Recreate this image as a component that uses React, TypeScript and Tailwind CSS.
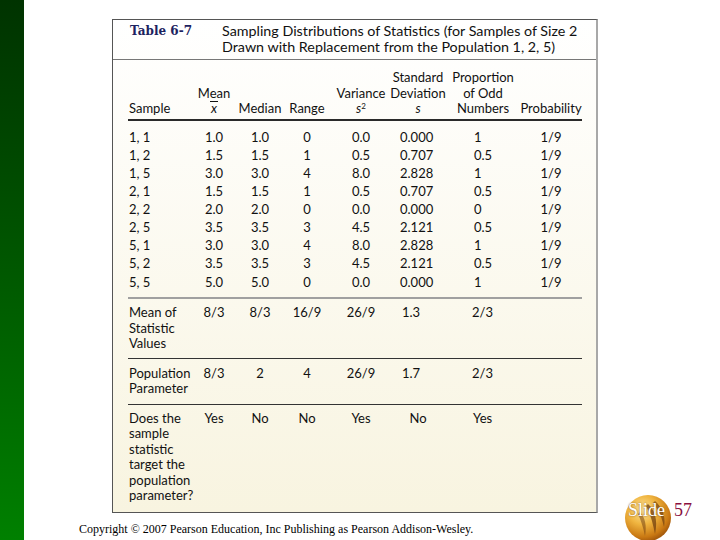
import React from 'react';

const data = [
  ['1, 1', '1.0', '1.0', '0', '0.0', '0.000', '1', '1/9'],
  ['1, 2', '1.5', '1.5', '1', '0.5', '0.707', '0.5', '1/9'],
  ['1, 5', '3.0', '3.0', '4', '8.0', '2.828', '1', '1/9'],
  ['2, 1', '1.5', '1.5', '1', '0.5', '0.707', '0.5', '1/9'],
  ['2, 2', '2.0', '2.0', '0', '0.0', '0.000', '0', '1/9'],
  ['2, 5', '3.5', '3.5', '3', '4.5', '2.121', '0.5', '1/9'],
  ['5, 1', '3.0', '3.0', '4', '8.0', '2.828', '1', '1/9'],
  ['5, 2', '3.5', '3.5', '3', '4.5', '2.121', '0.5', '1/9'],
  ['5, 5', '5.0', '5.0', '0', '0.0', '0.000', '1', '1/9'],
];

// column widths, content starts at x=128
const w = ['w-[62px]', 'w-[48px]', 'w-[44px]', 'w-[50px]', 'w-[58px]', 'w-[56px]', 'w-[74px]', 'w-[62px]'];
// alignment used in the body rows
const al = [
  'text-left pl-[1px]',
  'text-center',
  'text-center',
  'text-center',
  'text-center',
  'text-left pl-[10px]',
  'text-left pl-[28px]',
  'text-center',
];

function SlideBall() {
  return (
    <svg width="48" height="48" viewBox="0 0 48 48">
      <defs>
        <radialGradient id="ball" cx="0.38" cy="0.32" r="0.7">
          <stop offset="0" stopColor="#fde7a0" />
          <stop offset="0.45" stopColor="#f0b540" />
          <stop offset="0.85" stopColor="#c97812" />
          <stop offset="1" stopColor="#a55a0c" />
        </radialGradient>
      </defs>
      <circle cx="24" cy="24" r="23" fill="url(#ball)" />
      <path d="M24 10 C31 16 34 26 31 40 C29 30 27 21 22 12 Z" fill="#6b3a0e" opacity="0.7" />
      <path d="M31 7 C38 13 42 22 40 33 C38 24 35 16 29 9 Z" fill="#6b3a0e" opacity="0.65" />
      <path d="M16 18 C21 23 23 32 21 42 C19 33 17 26 14 20 Z" fill="#6b3a0e" opacity="0.5" />
    </svg>
  );
}

export default function App() {
  const font = { fontFamily: 'Lato, "Open Sans", sans-serif' };
  return (
    <div className="relative w-[720px] h-[540px] bg-white flex overflow-hidden">
      <div className="w-[24px] h-full bg-linear-to-b from-[#003300] to-[#008000]" />

      <div className="flex flex-col">
        <div
          className="ml-[88px] mt-[19px] w-[486px] h-[494px] border border-[#555] border-r-2 border-r-[#a8a8a8] bg-linear-to-b from-white to-[#f8f4e0] text-[13px] text-[#111] flex flex-col"
          style={font}
        >
          {/* title */}
          <div className="h-[40px] border-b border-[#777] flex pt-[3px] leading-[16px]">
            <div
              className="pl-[17px] w-[109px] font-bold text-[#1c2260] text-[12px]"
              style={{ fontFamily: '"DejaVu Serif", serif' }}
            >
              Table 6-7
            </div>
            <div className="text-[14.3px]">
              Sampling Distributions of Statistics (for Samples of Size 2
              <br />
              Drawn with Replacement from the Population 1, 2, 5)
            </div>
          </div>

          <div className="pl-[15px] flex flex-col">
            {/* headers */}
            <div className="flex items-end pt-[10px] pb-[2px] leading-[15.5px]">
              <div className={w[0] + ' pl-[1px]'}>Sample</div>
              <div className={w[1] + ' text-center'}>
                Mean
                <br />
                <span className="italic inline-block border-t border-[#111] leading-[12px] px-px">x</span>
              </div>
              <div className={w[2] + ' text-center'}>Median</div>
              <div className={w[3] + ' text-center'}>Range</div>
              <div className={w[4] + ' text-center'}>
                Variance
                <br />
                <span className="italic">s</span>
                <sup className="text-[8px]">2</sup>
              </div>
              <div className={w[5] + ' text-center whitespace-nowrap'}>
                Standard
                <br />
                Deviation
                <br />
                <span className="italic">s</span>
              </div>
              <div className={w[6] + ' text-center whitespace-nowrap'}>
                Proportion
                <br />
                of Odd
                <br />
                Numbers
              </div>
              <div className={w[7] + ' text-center'}>Probability</div>
            </div>
            <div className="w-[454px] h-[2px] bg-[#2a2a2a]" />

            {/* data rows */}
            <div className="pt-[8px] pb-[6px] flex flex-col">
              {data.map((r, i) => (
                <div key={i} className="flex h-[18.1px] items-center">
                  {r.map((v, j) => (
                    <div key={j} className={w[j] + ' ' + al[j]}>
                      {v}
                    </div>
                  ))}
                </div>
              ))}
            </div>
            <div className="w-[454px] h-[2px] bg-[#a0a0a0]" />

            {/* mean of statistic values */}
            <div className="flex pt-[6px] pb-[6px] leading-[15.5px]">
              <div className={w[0] + ' pl-[1px]'}>
                Mean of
                <br />
                Statistic
                <br />
                Values
              </div>
              <div className={w[1] + ' text-center'}>8/3</div>
              <div className={w[2] + ' text-center'}>8/3</div>
              <div className={w[3] + ' text-center'}>16/9</div>
              <div className={w[4] + ' text-center'}>26/9</div>
              <div className={w[5] + ' pl-[12px]'}>1.3</div>
              <div className={w[6] + ' pl-[26px]'}>2/3</div>
              <div className={w[7]} />
            </div>
            <div className="w-[454px] h-px bg-[#333]" />

            {/* population parameter */}
            <div className="flex pt-[7px] pb-[7px] leading-[15.5px]">
              <div className={w[0] + ' pl-[1px] whitespace-nowrap'}>
                Population
                <br />
                Parameter
              </div>
              <div className={w[1] + ' text-center'}>8/3</div>
              <div className={w[2] + ' text-center'}>2</div>
              <div className={w[3] + ' text-center'}>4</div>
              <div className={w[4] + ' text-center'}>26/9</div>
              <div className={w[5] + ' pl-[12px]'}>1.7</div>
              <div className={w[6] + ' pl-[26px]'}>2/3</div>
              <div className={w[7]} />
            </div>
            <div className="w-[454px] h-px bg-[#333]" />

            {/* target */}
            <div className="flex pt-[6px] leading-[15.5px]">
              <div className={w[0] + ' pl-[1px] whitespace-nowrap'}>
                Does the
                <br />
                sample
                <br />
                statistic
                <br />
                target the
                <br />
                population
                <br />
                parameter?
              </div>
              <div className={w[1] + ' text-center'}>Yes</div>
              <div className={w[2] + ' text-center'}>No</div>
              <div className={w[3] + ' text-center'}>No</div>
              <div className={w[4] + ' text-center'}>Yes</div>
              <div className={w[5] + ' text-center'}>No</div>
              <div className={w[6] + ' pl-[27px]'}>Yes</div>
              <div className={w[7]} />
            </div>
          </div>
        </div>

        <div
          className="ml-[55px] mt-[9px] text-[12px] leading-[14px] text-black"
          style={{ fontFamily: '"Liberation Serif", serif' }}
        >
          Copyright © 2007 Pearson Education, Inc Publishing as Pearson Addison-Wesley.
        </div>
      </div>

      {/* slide number badge */}
      <div className="absolute left-[624px] top-[494px] flex items-start">
        <SlideBall />
        <div
          className="absolute left-[4px] top-[6px] text-[18px] text-white leading-[20px] [text-shadow:0_0_2px_#7a4a10]"
          style={{ fontFamily: '"Liberation Serif", serif' }}
        >
          Slide
        </div>
        <div
          className="ml-[2px] mt-[6px] text-[18px] text-[#8a1040] leading-[20px]"
          style={{ fontFamily: '"Liberation Serif", serif' }}
        >
          57
        </div>
      </div>
    </div>
  );
}
